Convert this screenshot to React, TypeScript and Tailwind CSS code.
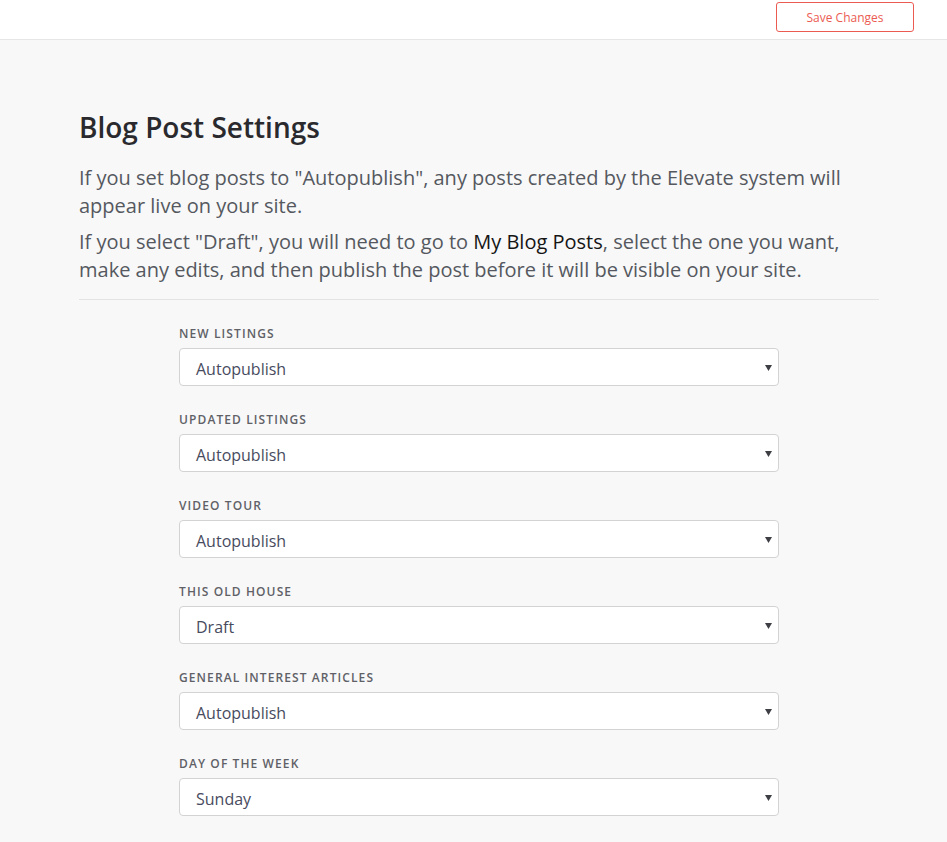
import React from "react";

const fields: { label: string; value: string }[] = [
  { label: "NEW LISTINGS", value: "Autopublish" },
  { label: "UPDATED LISTINGS", value: "Autopublish" },
  { label: "VIDEO TOUR", value: "Autopublish" },
  { label: "THIS OLD HOUSE", value: "Draft" },
  { label: "GENERAL INTEREST ARTICLES", value: "Autopublish" },
  { label: "DAY OF THE WEEK", value: "Sunday" },
];

function Field({ label, value }: { label: string; value: string }) {
  return (
    <div className="flex flex-col">
      <div className="text-[12px] font-semibold tracking-[1.1px] text-[#5f6167] leading-[16px] h-[16px]">
        {label}
      </div>
      <div className="relative mt-[6px] h-[38px] bg-white border border-[#d3d3d3] rounded-[4px] flex items-center">
        <span className="pl-[16px] text-[16px] text-[#484b5e] pt-[4px]">{value}</span>
        <svg
          className="absolute right-[6px] top-[16px]"
          width="7"
          height="6"
          viewBox="0 0 7 6"
        >
          <path d="M0 0 H7 L3.5 6 Z" fill="#3d3f44" />
        </svg>
      </div>
    </div>
  );
}

export default function App() {
  return (
    <div
      className="min-h-[842px] bg-[#f8f8f8]"
      style={{ fontFamily: '"Open Sans", "Noto Sans", sans-serif' }}
    >
      <header className="h-[40px] bg-white border-b border-[#e6e6e6] flex items-start justify-end pr-[33px] pt-[2px]">
        <button className="w-[138px] h-[30px] pt-[2px] border border-[#ec5b52] rounded-[3px] text-[#ec5b52] text-[12px] bg-white">
          Save Changes
        </button>
      </header>
      <main className="px-[79px] pt-[69px]">
        <div className="w-[800px]">
          <h1 className="text-[28px] font-semibold text-[#2a2a2e] leading-[36px]">
            Blog Post Settings
          </h1>
          <p className="mt-[19px] text-[20px] leading-[28px] text-[#55585f]">
            If you set blog posts to "Autopublish", any posts created by the Elevate system will appear live on your site.
          </p>
          <p className="mt-[8px] text-[20px] leading-[28px] text-[#55585f]">
            If you select "Draft", you will need to go to{" "}
            <span className="text-[#151515]">My Blog Posts</span>, select the one you want, make any edits, and then publish the post before it will be visible on your site.
          </p>
          <div className="mt-[15px] border-t border-[#e4e4e4]" />
        </div>
        <div className="ml-[100px] w-[600px] mt-[26px] flex flex-col gap-[26px]">
          {fields.map((f) => (
            <Field key={f.label} label={f.label} value={f.value} />
          ))}
        </div>
      </main>
    </div>
  );
}
